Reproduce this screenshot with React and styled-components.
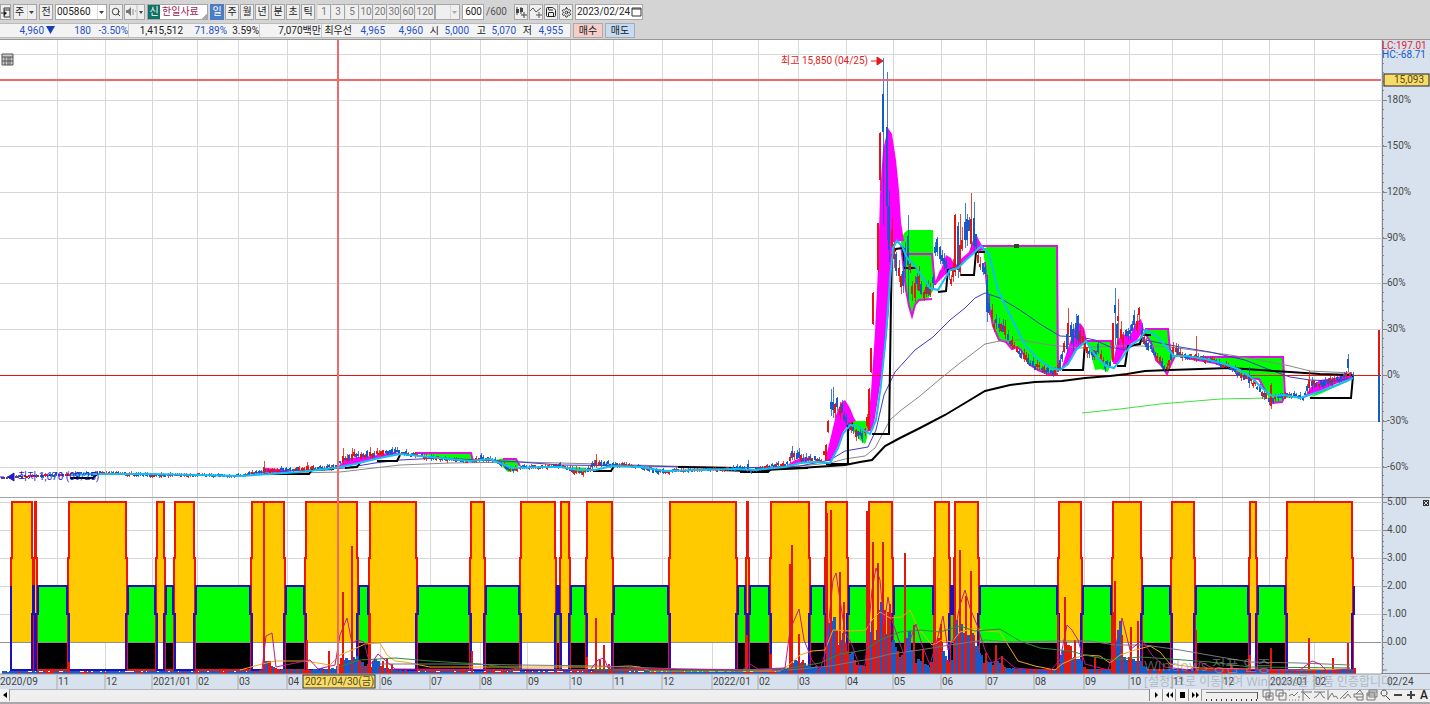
import React from 'react';
import styled, { createGlobalStyle, css } from 'styled-components';
import { LuSearch, LuSettings, LuSave } from 'react-icons/lu';

const GlobalStyle = createGlobalStyle`
  * {
    box-sizing: border-box;
  }
  body {
    margin: 0;
    background: #d4d4d4;
    color: #222;
    font-family: Roboto, 'Noto Sans CJK KR', sans-serif;
    font-size: 10px;
    line-height: 14px;
  }
  button, input, select {
    font: inherit;
    color: inherit;
    margin: 0;
    padding: 0;
    border-radius: 0;
  }
`;

const Page = styled.div`
  display: flex;
  flex-direction: column;
  height: 100vh;
  min-height: 400px;
  overflow: hidden;
`;

const Toolbar = styled.div`
  display: flex;
  align-items: center;
  gap: 2px;
  height: 22px;
  padding-top: 2px;
  white-space: nowrap;
`;

const Group = styled.div`
  display: flex;
  gap: ${(p) => (p.$tight ? 0 : 1)}px;
`;

const ToolButton = styled.button`
  display: flex;
  align-items: center;
  justify-content: center;
  width: ${(p) => p.$width || 14}px;
  height: 16px;
  border: 1px solid #a6a6a6;
  background: #efefef;
  line-height: 14px;
  ${(p) =>
    p.$muted &&
    css`
      color: #777;
      border-left-color: #e4e4e4;
    `}
  ${(p) =>
    p.$active &&
    css`
      background: #4b7cc4;
      border-color: #4b7cc4;
      color: #fff;
    `}
  svg {
    flex: none;
  }
`;

const Field = styled.div`
  display: flex;
  align-items: center;
  width: ${(p) => p.$width}px;
  height: 16px;
  border: 1px solid #a6a6a6;
  background: ${(p) => (p.$plain ? '#efefef' : '#fff')};
  input,
  select {
    flex: 1;
    min-width: 0;
    height: 14px;
    padding: 0 1px;
    border: 0;
    outline: 0;
    background: transparent;
    appearance: none;
    text-align: ${(p) => p.$align || 'left'};
  }
  svg {
    flex: none;
  }
`;

const Total = styled.span`
  width: 26px;
  color: #555;
`;

const Stock = styled.div`
  display: flex;
  width: 61px;
  height: 16px;
  border: 1px solid #a6a6a6;
  background: linear-gradient(135deg, #fff 93%, #aaa 93%);
  color: #a01850;
  b {
    width: 12px;
    margin-right: 2px;
    background: #0f7267;
    color: #fff;
    font-weight: 400;
    text-align: center;
  }
`;

const QuoteBar = styled.div`
  display: flex;
  gap: 2px;
  height: 17px;
  padding: 1px 0;
  white-space: nowrap;
`;

const Quotes = styled.div`
  display: flex;
  width: 571px;
  border: 1px solid #bbb;
  border-left: 0;
  background: #f3f3f3;
`;

const Quote = styled.span`
  width: ${(p) => p.$width}px;
  height: 13px;
  line-height: 13px;
  text-align: right;
  color: ${(p) => (p.$blue ? '#1f52c8' : '#222')};
  border-right: ${(p) => (p.$line ? '1px solid #ccc' : '0')};
`;

const OrderButton = styled.button`
  width: 30px;
  height: 15px;
  border: 1px solid #aaa;
  background: ${(p) => (p.$sell ? '#c3dbf3' : '#f5cdc9')};
  line-height: 12px;
`;

const ChartGrid = styled.main`
  position: relative;
  flex: 1;
  min-height: 0;
  display: grid;
  grid-template-columns: minmax(0, 1fr) 49px;
  grid-template-rows: 458fr 176fr 15px;
  border-top: 1px solid #989898;
`;

const Panel = styled.svg`
  display: block;
  width: 100%;
  height: 100%;
  min-height: 0;
  overflow: ${(p) => (p.$axis ? 'visible' : 'hidden')};
  background: ${(p) => (p.$axis ? '#d7e2ee' : '#fff')};
  font-size: 10px;
`;

const Watermark = styled.div`
  position: absolute;
  right: 0;
  bottom: 0;
  width: 286px;
  color: rgba(150, 154, 160, 0.6);
  font-family: 'Open Sans', 'Noto Sans CJK KR', sans-serif;
  font-size: 12px;
  line-height: 14px;
  white-space: nowrap;
  pointer-events: none;
  p {
    margin: 0;
  }
  p:first-child {
    font-size: 15px;
    line-height: 20px;
  }
`;

const BottomBar = styled.footer`
  display: flex;
  align-items: center;
  height: 15px;
  padding-bottom: 2px;
  border-top: 1px solid #b4b4b4;
  background: #efefef;
  border-bottom: 2px solid #a8a8a8;
`;

const Track = styled.div`
  display: flex;
  flex: 1;
  height: 12px;
  border-right: 1px solid #888;
`;

const PlayButton = styled.button`
  display: flex;
  align-items: center;
  justify-content: center;
  width: ${(p) => p.$width || 13}px;
  height: 12px;
  border: 0;
  border-right: 1px solid #999;
  background: #f4f4f4;
`;

const Speed = styled.input`
  width: 52px;
  height: 12px;
  margin: 0 4px;
  appearance: none;
  background: linear-gradient(#777, #777) 0 3px / 100% 1px no-repeat,
    repeating-linear-gradient(90deg, #333 0 1px, transparent 1px 5px) 0 10px / 100% 2px no-repeat;
  &::-webkit-slider-thumb {
    appearance: none;
    width: 1px;
    height: 7px;
    background: #555;
  }
`;

const BottomTools = styled.div`
  display: flex;
  width: 168px;
  justify-content: space-between;
`;

const IconButton = styled.button`
  display: flex;
  align-items: center;
  justify-content: center;
  width: 12px;
  height: 12px;
  border: 0;
  background: transparent;
  font-size: 12px;
  font-weight: 500;
`;

const BLUE = '#1659c8';
const RED = '#e3170d';
const MAGENTA = '#ff00ff';
const GREEN = '#00ff00';
const CYAN = '#12c0f0';
const CROSSHAIR = '#f06a6a';

const months = [
  [57, '11'], [105, '12'], [152, '2021/01'], [197, '02'], [238, '03'], [287, '04'],
  [380, '06'], [430, '07'], [480, '08'], [527, '09'], [570, '10'], [613, '11'],
  [662, '12'], [712, '2022/01'], [758, '02'], [798, '03'], [846, '04'], [893, '05'],
  [941, '06'], [986, '07'], [1034, '08'], [1084, '09'], [1129, '10'], [1172, '11'],
  [1222, '12'], [1269, '2023/01'], [1314, '02'],
];

const priceTicks = [
  [100, '180%'], [146, '150%'], [192, '120%'], [238, '90%'], [283, '60%'],
  [329, '30%'], [375, '0%'], [421, '-30%'], [467, '-60%'],
];

const signalTicks = [
  [502, '5.00'], [530, '4.00'], [558, '3.00'], [586, '2.00'], [614, '1.00'], [642, '0.00'],
];

// spans where the buy signal is on
const signals = [
  [12, 32], [35, 36], [69, 126], [157, 164], [175, 194], [252, 284], [306, 357],
  [370, 416], [471, 484], [521, 555], [561, 569], [587, 612], [670, 736], [747, 748],
  [771, 809], [826, 847], [869, 892], [935, 949], [955, 978], [1059, 1081],
  [1113, 1141], [1172, 1194], [1250, 1256], [1287, 1352],
];

// x, middle, spread
const pricePath = [
  [2, 478, 1], [12, 477, 1], [60, 475, 3], [100, 473, 3], [150, 475, 4], [200, 475, 3],
  [240, 476, 3], [262, 471, 4], [300, 469, 4], [334, 467, 5], [341, 461, 7], [354, 456, 8],
  [372, 455, 7], [392, 451, 6], [402, 453, 5], [430, 457, 5], [450, 460, 4], [470, 461, 4],
  [480, 458, 6], [495, 460, 5], [511, 471, 6], [521, 467, 4], [545, 467, 4], [560, 465, 4],
  [575, 472, 6], [585, 472, 6], [596, 464, 7], [612, 464, 5], [640, 467, 3], [662, 472, 6],
  [690, 470, 3], [720, 470, 3], [740, 468, 5], [752, 471, 4], [770, 466, 4], [786, 464, 5],
  [791, 455, 10], [800, 457, 9], [810, 459, 7], [822, 461, 5], [827, 435, 12], [830, 406, 14],
  [837, 405, 13], [842, 411, 14], [848, 424, 10], [856, 432, 10], [863, 438, 10],
  [866, 428, 14], [889, 225, 25], [892, 245, 25], [899, 275, 22], [902, 290, 20],
  [905, 260, 30], [909, 258, 26], [912, 292, 20], [918, 284, 22], [924, 295, 14],
  [932, 290, 14], [936, 240, 18], [941, 257, 16], [946, 262, 16], [951, 282, 14],
  [955, 255, 28], [959, 250, 28], [965, 235, 28], [970, 230, 28], [974, 235, 24],
  [978, 258, 14], [985, 272, 16], [988, 305, 22], [993, 322, 14], [1003, 325, 14],
  [1008, 340, 10], [1018, 350, 10], [1030, 364, 9], [1042, 369, 8], [1056, 373, 6],
  [1062, 355, 16], [1068, 335, 22], [1078, 330, 20], [1084, 345, 12], [1090, 356, 12],
  [1098, 350, 12], [1105, 367, 9], [1111, 362, 12], [1114, 345, 18], [1118, 328, 20],
  [1124, 338, 16], [1132, 330, 14], [1139, 320, 14], [1144, 343, 9], [1151, 346, 9],
  [1158, 358, 9], [1167, 370, 8], [1173, 348, 12], [1182, 356, 7], [1200, 357, 7],
  [1216, 362, 6], [1230, 368, 6], [1240, 375, 7], [1250, 379, 8], [1262, 393, 8],
  [1270, 402, 9], [1280, 397, 6], [1292, 395, 5], [1303, 398, 5], [1309, 385, 10],
  [1320, 384, 8], [1335, 380, 8], [1346, 376, 6], [1353, 375, 5],
];

// x, high, body top, body bottom, low, colour
const keyCandles = [
  [264, 461, 467, 473, 474, RED], [307, 462, 466, 470, 471, RED], [343, 448, 456, 462, 464, RED],
  [352, 448, 454, 460, 461, RED], [370, 447, 452, 456, 458, RED], [392, 447, 449, 455, 456, BLUE],
  [596, 454, 460, 466, 468, RED], [748, 460, 464, 470, 471, BLUE], [826, 444, 445, 460, 461, RED],
  [828, 420, 421, 432, 433, RED], [831, 389, 402, 409, 416, BLUE], [833, 387, 402, 410, 418, BLUE],
  [869, 388, 389, 430, 431, RED], [871, 348, 348, 372, 373, RED], [873, 292, 293, 324, 325, RED],
  [878, 223, 223, 270, 272, RED], [880, 132, 133, 180, 191, RED], [883, 58, 94, 132, 225, BLUE],
  [887, 72, 127, 206, 240, BLUE], [889, 190, 206, 250, 262, BLUE], [908, 215, 236, 265, 300, BLUE],
  [955, 214, 215, 272, 276, RED], [958, 222, 226, 270, 278, BLUE], [960, 214, 245, 272, 276, RED],
  [965, 203, 222, 240, 248, BLUE], [971, 193, 219, 244, 250, RED], [974, 202, 218, 246, 252, BLUE],
  [987, 275, 280, 312, 322, BLUE], [1068, 308, 323, 334, 345, RED], [1078, 315, 316, 340, 345, BLUE],
  [1113, 323, 323, 360, 362, RED], [1115, 288, 305, 313, 345, BLUE], [1118, 299, 316, 321, 345, RED],
  [1134, 310, 315, 325, 330, BLUE], [1139, 307, 308, 315, 325, RED], [1196, 336, 354, 359, 362, RED],
  [1249, 367, 376, 383, 388, BLUE], [1271, 383, 385, 406, 409, RED], [1309, 371, 380, 388, 396, RED],
  [1348, 354, 359, 368, 372, BLUE],
];

// x, height of the ordinary bars
const volumePath = [
  [2, 3], [250, 3], [262, 5], [266, 15], [275, 6], [300, 5], [334, 6], [340, 18], [351, 16],
  [356, 20], [363, 10], [370, 10], [374, 16], [382, 7], [396, 5], [420, 3], [590, 3],
  [600, 6], [620, 3], [740, 3], [786, 4], [794, 18], [805, 10], [820, 6], [825, 12],
  [829, 62], [834, 60], [837, 36], [843, 46], [849, 26], [855, 10], [865, 8], [868, 52],
  [876, 52], [881, 88], [884, 50], [893, 34], [899, 20], [904, 24], [907, 50], [911, 20],
  [920, 12], [928, 8], [934, 20], [937, 50], [943, 22], [951, 14], [955, 55], [963, 50],
  [970, 46], [976, 30], [985, 13], [997, 14], [1006, 6], [1055, 4], [1060, 22],
  [1067, 45], [1071, 18], [1079, 18], [1083, 7], [1110, 4], [1114, 40], [1118, 66],
  [1121, 18], [1130, 18], [1139, 14], [1146, 5], [1200, 4], [1300, 4], [1353, 6],
];

const volumeSpikes = [
  [69, 662], [264, 503], [307, 640], [329, 651], [338, 513], [343, 592], [352, 546], [370, 613],
  [383, 661], [387, 658], [392, 664], [472, 651], [587, 657], [596, 618], [600, 660], [604, 645],
  [609, 664], [747, 635], [771, 654], [790, 564], [792, 545], [799, 634], [803, 660],
  [827, 513], [831, 510], [840, 572], [844, 602], [867, 511], [869, 503], [873, 542],
  [878, 563], [883, 542], [888, 612], [890, 604], [905, 553], [914, 625], [923, 649],
  [935, 518], [941, 624], [955, 521], [960, 550], [966, 596], [971, 571], [974, 635],
  [986, 653], [996, 645], [1002, 656], [1058, 614], [1065, 597], [1075, 640], [1095, 657],
  [1113, 612], [1115, 581], [1122, 635], [1131, 627], [1138, 621], [1196, 630], [1271, 648],
  [1309, 638], [1333, 658], [1348, 643], [1250, 655], [1231, 664],
];

const random = (seed) => {
  let s = seed;
  return () => {
    s = (s * 16807) % 2147483647;
    return s / 2147483647;
  };
};

const at = (path, x, k) => {
  const i = path.findIndex((p) => p[0] >= x);
  if (i < 0) return path[path.length - 1][k];
  if (i === 0) return path[0][k];
  const a = path[i - 1];
  const b = path[i];
  return a[k] + ((b[k] - a[k]) * (x - a[0])) / (b[0] - a[0]);
};

const STEP = 2.27;

const makeCandles = () => {
  const rnd = random(77);
  const list = [];
  for (let x = 2; x < 1354; x += STEP) {
    const spread = at(pricePath, x, 2);
    const mid = at(pricePath, x, 1) + (rnd() - 0.5) * spread * 0.5;
    const body = Math.max(2, spread * (0.25 + rnd() * 0.5));
    const up = rnd() * spread * 0.5;
    const down = rnd() * spread * 0.4;
    const color = rnd() > 0.52 ? RED : BLUE;
    const taken = (x > 867 && x < 888) || keyCandles.some((c) => Math.abs(c[0] - x) < 1.1);
    if (!taken) list.push([x, mid - body / 2 - up, mid - body / 2, mid + body / 2, mid + body / 2 + down, color]);
  }
  return list.concat(keyCandles);
};

const makeVolumes = () => {
  const rnd = random(1234);
  const list = [];
  for (let x = 2; x < 1354; x += STEP) {
    const red = rnd() > 0.7;
    const h = at(volumePath, x, 1) * (red ? 0.6 + rnd() * 0.4 : 0.75 + rnd() * 0.3);
    list.push([x, h, red ? RED : BLUE]);
  }
  return list;
};

const candles = makeCandles();
const volumes = makeVolumes();

const signalLine = signals
  .map(([a, b]) => `${a - 1},670 ${a - 1},558 ${a},558 ${a},502 ${b},502 ${b},558 ${b + 1},558 ${b + 1},670`)
  .join(' ');
const idleLine = `11,586 11,670 ${signals
  .map(([a, b], i) => {
    const next = signals[i + 1];
    const up = `${b},670 ${b},614 ${b + 2},614 ${b + 2},586`;
    return next ? `${up} ${next[0] - 2},586 ${next[0] - 2},614 ${next[0]},614 ${next[0]},670` : up;
  })
  .join(' ')}`;

const magentaAreas = [
  '262,472 266,468 280,469 292,471 280,473',
  '338,467 345,459 358,457 372,456 392,452 400,453 385,457 365,461 350,465',
  '786,466 795,460 806,457 812,460 800,463',
  '825,461 831,436 836,415 841,403 845,400 850,408 854,418 856,421 849,424 843,432 838,447 832,461',
  '867,432 871,392 875,332 878,268 880,195 883,150 888,128 892,134 896,160 899,190 901,222 904,241 893,242 891,262 889,310 885,352 879,392 873,430',
  '936,284 941,270 946,255 951,258 955,266 962,258 969,252 973,240 976,234 980,242 985,250 976,252 968,258 958,268 948,272 941,279',
  '1061,370 1069,345 1075,327 1080,323 1084,328 1087,341 1080,345 1074,355 1068,365',
  '1113,364 1117,342 1122,334 1130,336 1136,322 1141,319 1144,330 1137,340 1129,345 1123,354 1118,364',
  '1304,398 1311,387 1320,380 1335,378 1352,372 1352,379 1338,383 1322,390',
];

const greenAreas = [
  '415,453 471,453 473,461 458,460 435,457',
  '495,460 505,458 515,459 520,464 515,471 508,472 502,466',
  '572,467 585,468 588,471 583,473 577,472',
  '848,424 853,421 867,421 867,438 865,444 860,440 855,433',
  '901,242 904,233 908,230 933,230 934,289 928,299 919,300 915,305 912,316 909,306 906,290 903,262',
  '983,249 987,247 1057,247 1057,374 1048,374 1038,370 1029,364 1021,350 1017,347 1012,349 1006,342 999,340 993,326 988,300 985,265',
  '1087,341 1111,342 1112,358 1108,372 1101,369 1095,370 1092,358 1088,346',
  '1143,329 1168,329 1170,345 1174,360 1170,366 1167,374 1161,365 1156,360 1152,345',
  '1180,357 1283,358 1284,395 1281,402 1271,403 1266,392 1259,379 1245,378 1234,370 1215,363 1195,360',
  '1308,398 1322,390 1338,384 1352,380 1335,387 1320,394',
];

const magentaLines = [
  '415,453 471,453 473,461',
  '503,459 516,459 520,466',
  '905,254 932,254 935,285 941,270',
  '901,245 906,290 909,306 912,316 915,305 919,300 932,299',
  '981,246 1057,246 1058,372',
  '985,262 988,300 993,326 999,340 1006,342 1012,349 1017,347 1021,350 1029,364 1038,370 1048,374 1058,374',
  '1087,341 1111,341 1113,362',
  '1145,329 1168,329 1170,350 1172,355',
  '1145,333 1152,345 1156,360 1161,365 1167,374 1171,364 1175,356',
  '1202,357 1283,357 1285,395 1282,402 1271,403',
  '1186,358 1215,363 1234,370 1245,378 1259,379 1266,392',
];

const blackSteps = [
  '70,478 93,478 97,474',
  '264,474 309,474 312,470 334,469',
  '345,468 357,467 360,463',
  '377,461 397,461 400,455',
  '593,471 611,471 614,466',
  '678,467 735,468 742,471',
  '740,472 768,472 771,469 808,468',
  '826,464 848,464 848,426 853,423',
  '872,434 889,434 891,300 892,255 896,249 903,248 905,268 917,268',
  '938,292 946,291 948,270 956,269',
  '960,275 974,275 976,252 985,252',
  '1062,370 1083,370 1085,342',
  '1117,366 1125,366 1128,346 1140,344 1142,335 1151,335',
  '1310,398 1351,398 1353,376',
];

const cyanLine =
  '70,475 95,474 150,474 200,475 240,476 270,474 300,472 335,468 355,464 375,459 400,454 430,457 470,461 490,459 512,468 545,467 560,467 578,470 595,470 612,466 640,467 665,471 700,470 735,469 755,470 785,467 800,463 815,462 830,463 838,448 843,434 850,425 857,426 863,430 870,434 876,420 881,385 886,335 890,280 893,248 897,241 902,246 907,258 915,266 921,275 930,288 938,290 944,280 950,270 958,268 966,260 975,252 981,246 989,254 993,270 998,290 1005,305 1015,325 1025,345 1037,358 1049,367 1060,370 1068,364 1076,350 1086,341 1095,355 1106,366 1114,368 1122,358 1130,346 1140,339 1146,330 1158,337 1167,348 1174,356 1187,356 1205,359 1225,364 1240,370 1252,378 1262,388 1272,396 1284,395 1300,398 1318,392 1335,386 1353,378';

const volumeAverages = [
  ['#f0a818', '240,670 262,664 275,661 305,661 330,665 340,655 352,650 365,644 380,643 387,655 395,661 405,662 430,667 600,667 630,666 640,667 650,671 780,671 790,664 800,655 812,651 825,650 833,630 850,631 866,630 872,620 880,612 890,618 902,617 910,610 918,628 925,636 932,645 942,640 952,642 960,632 975,628 985,631 1000,632 1008,645 1018,661 1035,666 1055,670 1062,664 1075,658 1085,655 1100,656 1110,663 1120,655 1135,650 1150,646 1160,652 1170,664 1200,668 1300,670 1350,669'],
  ['#2e8a3a', '336,668 360,660 395,658 430,661 480,664 520,669 740,671 790,668 820,663 840,654 865,650 880,640 900,632 920,630 940,632 960,626 975,631 1000,629 1020,641 1040,648 1070,651 1085,655 1110,660 1140,657 1170,659 1210,662 1250,667 1350,668'],
  ['#777', '380,664 450,664 520,665 600,666 680,669 790,670 830,666 870,659 890,654 920,650 950,645 985,640 1010,642 1060,641 1090,641 1115,645 1145,645 1180,650 1220,657 1250,662 1300,663 1350,665'],
  ['#c01890', '262,670 266,636 272,633 276,667 310,660 318,669 335,665 340,635 347,618 352,643 358,640 364,642 370,665 378,654 385,660 395,669 590,670 598,660 604,658 608,668 742,670 750,664 758,669 785,668 790,630 799,609 804,640 812,660 820,670 826,650 833,580 836,573 840,600 845,632 852,645 860,668 865,665 872,590 876,568 880,580 884,625 888,597 892,620 898,638 904,655 910,640 916,624 922,645 930,665 937,640 943,616 948,650 953,640 960,605 965,590 970,608 977,625 985,650 992,663 1002,657 1015,668 1050,671 1060,660 1067,625 1072,630 1078,640 1085,664 1108,670 1117,640 1122,618 1130,650 1142,640 1152,655 1165,667 1190,670 1200,662 1215,669 1300,670 1312,661 1320,664 1327,671 1350,669'],
];

function Grid({ top, bottom, lines }) {
  return (
    <g stroke="#d8d8d8" shapeRendering="crispEdges">
      {months.map(([x]) => (
        <line key={x} x1={x} x2={x} y1={top} y2={bottom} />
      ))}
      {lines.map((y) => (
        <line key={y} x1="0" x2="1381" y1={y} y2={y} />
      ))}
    </g>
  );
}

function PriceChart() {
  return (
    <Panel viewBox="0 40 1381 458" preserveAspectRatio="none" role="img" aria-label="한일사료 일봉">
      <Grid top={40} bottom={498} lines={[54, ...priceTicks.map((t) => t[0])]} />
      <g fill={GREEN}>
        {greenAreas.map((p) => (
          <polygon key={p} points={p} />
        ))}
      </g>
      <g fill={MAGENTA}>
        {magentaAreas.map((p) => (
          <polygon key={p} points={p} />
        ))}
      </g>
      <g fill="none" stroke="#e010e0" strokeWidth="2">
        {magentaLines.map((p) => (
          <polyline key={p} points={p} />
        ))}
      </g>
      <rect x="0" y="375" width="1381" height="1" fill={RED} />
      <g fill="none">
        <polyline stroke="#888" points="250,474 340,472 400,465 450,463 520,462 600,464 700,467 780,468 830,463 845,459 865,456 875,448 890,420 900,411 920,396 940,379 960,363 985,344 1000,341 1020,340 1050,345 1080,348 1110,346 1140,346 1170,347 1200,351 1230,355 1260,360 1290,366 1310,371 1352,373" />
        <polyline stroke="#4038c8" points="250,473 345,468 375,463 400,460 440,458 480,460 520,462 560,465 640,466 740,468 800,466 830,460 845,451 868,447 876,430 884,395 895,372 915,350 933,337 950,320 965,308 975,298 985,293 1000,298 1020,310 1040,324 1060,336 1080,337 1095,340 1110,347 1125,350 1145,340 1160,343 1180,347 1210,352 1245,360 1270,370 1290,377 1310,380 1335,381 1352,378" />
        <polyline stroke="#40e040" points="1082,413 1120,409 1160,404 1220,399 1270,398 1300,397" />
        <polyline stroke="#000" strokeWidth="2" points="720,470 750,471 800,468 845,465 860,462 872,460 885,446 900,438 920,428 945,415 965,403 985,391 1010,385 1035,382 1062,381 1085,378 1110,376 1127,374 1145,371 1170,370 1200,369 1230,368 1260,370 1290,372 1320,374 1352,375" />
        {blackSteps.map((p) => (
          <polyline key={p} points={p} stroke="#000" strokeWidth="2" />
        ))}
      </g>
      <g shapeRendering="crispEdges">
        {candles.map(([x, high, top, bottom, low, color]) => (
          <g key={x} fill={color}>
            <rect x={x} y={high} width="1" height={low - high} opacity="0.8" />
            <rect x={x - 1} y={top} width="2" height={bottom - top} />
          </g>
        ))}
      </g>
      <polyline fill="none" stroke={CYAN} strokeWidth="2" points={cyanLine} />
      <rect x="1014" y="244" width="5" height="4" fill="#274b20" />
      <rect x="0" y="79" width="1381" height="2" fill={CROSSHAIR} />
      <rect x="337" y="40" width="2" height="458" fill={CROSSHAIR} />
      <text x="868" y="64" textAnchor="end" fill="#e01c1c">최고 15,850 (04/25)</text>
      <path d="M871 61h7M877 57l6 4-6 4z" stroke="#e01c1c" fill="#e01c1c" />
      <text x="18" y="480" fill="#1c1ccc">최저 1,670 (09/25)</text>
      <path d="M14 473v8l-6-4zM0 477h4" fill="#1c1ccc" stroke="#1c1ccc" />
      <path d="M2 54h11v11H2zM2 57h11M5 57v8M8 57v8M10 57v8M2 61h11" fill="#ccc" stroke="#555" strokeWidth="1" />
      <path d="M1379 330v45" stroke={RED} strokeWidth="2" />
      <path d="M1379 375v47" stroke={BLUE} strokeWidth="2" />
      <line x1="0" x2="1381" y1="497" y2="497" stroke="#a4a4a4" shapeRendering="crispEdges" />
    </Panel>
  );
}

function SignalChart() {
  return (
    <Panel viewBox="0 498 1381 176" preserveAspectRatio="none" role="img" aria-label="신호">
      <Grid top={498} bottom={674} lines={signalTicks.map((t) => t[0])} />
      <g shapeRendering="crispEdges">
        {signals.map(([a, b], i) => {
          const next = signals[i + 1];
          return (
            <g key={a}>
              <rect x={a} y="502" width={b - a} height="140" fill="#ffca00" />
              {next && <rect x={b + 1} y="586" width={next[0] - b - 2} height="56" fill={GREEN} />}
              {next && <rect x={b + 1} y="642" width={next[0] - b - 2} height="28" fill="#000" />}
            </g>
          );
        })}
        <line x1="0" x2="1381" y1="642" y2="642" stroke="#909090" />
      </g>
      <polyline points={signalLine} fill="none" stroke="#f01408" strokeWidth="2" />
      <polyline points={idleLine} fill="none" stroke="#1a10c0" strokeWidth="2" />
      <g shapeRendering="crispEdges">
        {volumes.map(([x, h, color]) => (
          <rect key={x} x={x} y={674 - h} width="3" height={h} fill={color} />
        ))}
        {volumeSpikes.map(([x, y]) => (
          <rect key={x} x={x - 1} y={y} width="2" height={674 - y} fill={RED} />
        ))}
      </g>
      <g fill="none">
        {volumeAverages.map(([color, points]) => (
          <polyline key={color} points={points} stroke={color} />
        ))}
      </g>
      <rect x="337" y="498" width="2" height="176" fill={CROSSHAIR} />
    </Panel>
  );
}

function Axis({ top, height, ticks, minor, children }) {
  const small = [];
  for (let y = ticks[0][0] % minor; y < top + height; y += minor) {
    if (y > top + 15) small.push(y);
  }
  return (
    <Panel $axis viewBox={`1381 ${top} 49 ${height}`} preserveAspectRatio="none">
      <g stroke="#888" shapeRendering="crispEdges">
        <line x1="1382" x2="1382" y1={top} y2={top + height} />
        <line x1="1381" x2="1430" y1={top + height - 1} y2={top + height - 1} />
        {small.map((y) => (
          <line key={y} x1="1382" x2="1384" y1={y} y2={y} />
        ))}
        {ticks.map(([y]) => (
          <line key={y} x1="1382" x2="1387" y1={y} y2={y} />
        ))}
      </g>
      {ticks.map(([y, label]) => (
        <text key={y} x="1387" y={y + 3} fill="#4a4a4a">
          {label}
        </text>
      ))}
      {children}
    </Panel>
  );
}

function DateAxis() {
  return (
    <Panel $axis viewBox="0 674 1381 15" preserveAspectRatio="none">
      <path d="M0 674h1381" stroke="#999" />
      <text x="0" y="685" fill="#444">2020/09</text>
      {months.map(([x, label]) => (
        <g key={x}>
          <path d={`M${x} 675v14`} stroke="#aaa" />
          <text x={x + 1} y="685" fill="#444">
            {label}
          </text>
        </g>
      ))}
      <rect x="303" y="675" width="72" height="13" fill="#f8dc68" stroke="#333" />
      <text x="305" y="685" fill="#554a20">2021/04/30(금)</text>
    </Panel>
  );
}

function Arrow({ color = '#444' }) {
  return (
    <svg width="9" height="14">
      <path d="M0 0v14" stroke="#bbb" />
      <path d="M2 6h5l-2.500 3z" fill={color} />
    </svg>
  );
}

const playIcons = [
  ['재생', 'M4 3l3 3-3 3z'],
  ['되감기', 'M5 3v6L2 6zM9 3v6L6 6z'],
  ['정지', 'M3 3h5v6H3z'],
  ['빨리 감기', 'M2 3v6l3-3zM6 3v6l3-3z'],
];

const bottomIcons = [
  ['분할', 'M1 1h7v7H1zM4 4h7v7H4zM7 5v5M5 7h5'],
  ['겹치기', 'M1 1h7v6H1zM4 4h7v7H4z'],
  ['지표', 'M1 7l3-2 2 2 4-4M1 11h1M4 11h1M7 11h1M10 11h1M1 1h1M11 7v2'],
  ['추세선', 'M2 0v12M0 3h11M2 3l7 7'],
  ['수평선', 'M0 3h11M0 9l3-2 3-4 3 5 2 1'],
  ['파동', 'M1 1v10M1 10l4-6 2 4 2-1 2 3'],
  ['각도', 'M0 10l8-8M3 9h2l3-4 3 4'],
  ['도형', 'M1 5h9v3H1zM3 5l4-4 3 4M4 8v3h6V8'],
  ['창', 'M3 1h8v7H3zM1 4h8v7H1zM3 3h8M1 6h8'],
  ['돋보기', 'M5 1a3 3 0 1 0 .1 0M7 7l4 4'],
  ['축소', 'M2 6h8'],
  ['확대', 'M2 6h8M6 2v8'],
];

function TopToolbar() {
  return (
    <Toolbar>
      <ToolButton $width={11} aria-label="창 연결">
        <svg width="9" height="12">
          <path d="M3 2h6v9H3zM3 4h6M0 7h4" fill="none" stroke="#333" />
          <path d="M3 5l3 2-3 3z" fill="#222" />
        </svg>
      </ToolButton>
      <Field $width={24} $plain>
        <select aria-label="종목 구분">
          <option>주</option>
        </select>
        <Arrow />
      </Field>
      <ToolButton>전</ToolButton>
      <Field $width={52}>
        <input aria-label="종목 코드" defaultValue="005860" />
        <Arrow />
      </Field>
      <Group>
        <ToolButton aria-label="검색">
          <LuSearch size={10} />
        </ToolButton>
        <ToolButton $width={21} aria-label="소리">
          <svg width="19" height="14">
            <path d="M1 5h2l3-3v9L3 8H1z" fill="#777" />
            <path d="M8 4v6M10 6h1" stroke="#888" />
            <path d="M12 0v14" stroke="#bbb" />
            <path d="M14 6h4l-2 3z" fill="#444" />
          </svg>
        </ToolButton>
      </Group>
      <Stock>
        <b>신</b>한일사료
      </Stock>
      <Group>
        <ToolButton $active>일</ToolButton>
        <ToolButton>주</ToolButton>
        <ToolButton>월</ToolButton>
        <ToolButton>년</ToolButton>
      </Group>
      <Group>
        <ToolButton>분</ToolButton>
        <ToolButton>초</ToolButton>
        <ToolButton>틱</ToolButton>
      </Group>
      <Group $tight>
        {['1', '3', '5', '10', '20', '30', '60', '120'].map((n) => (
          <ToolButton key={n} $muted $width={n.length > 2 ? 20 : 14}>
            {n}
          </ToolButton>
        ))}
        <Field $width={25} $plain>
          <select aria-label="분 간격" />
          <Arrow color="#aaa" />
        </Field>
      </Group>
      <Field $width={22} $align="right">
        <input aria-label="봉 개수" defaultValue="600" />
      </Field>
      <Total>/600</Total>
      <Group>
        <ToolButton aria-label="봉 추가">
          <svg width="12" height="12">
            <path d="M2 1v8M6 1v7M9 6v6M6 9h6" stroke="#444" />
            <path d="M1 3h3v4H1zM5 2h3v4H5z" fill="#444" />
          </svg>
        </ToolButton>
        <ToolButton aria-label="지표 추가">
          <svg width="12" height="12">
            <path d="M0 5l3-3 3 4 5-4M9 6v6M6 9h6" fill="none" stroke="#555" />
          </svg>
        </ToolButton>
        <ToolButton aria-label="저장">
          <LuSave size={12} />
        </ToolButton>
        <ToolButton aria-label="설정">
          <LuSettings size={11} />
        </ToolButton>
      </Group>
      <Field $width={68}>
        <input aria-label="날짜" defaultValue="2023/02/24" />
        <svg width="11" height="14">
          <path d="M1 3h9v8H1zM1 4h9" fill="none" stroke="#333" />
        </svg>
      </Field>
    </Toolbar>
  );
}

function App() {
  return (
    <>
      <GlobalStyle />
      <Page>
        <TopToolbar />
        <QuoteBar>
          <Quotes>
            <Quote $width={44} $blue>4,960</Quote>
            <Quote $width={11} $blue>
              <svg width="9" height="9">
                <path d="M0 1h9L4.500 9z" fill="#1440c0" />
              </svg>
            </Quote>
            <Quote $width={36} $blue>180</Quote>
            <Quote $width={38} $blue $line>-3.50%</Quote>
            <Quote $width={54}>1,415,512</Quote>
            <Quote $width={44} $blue>71.89%</Quote>
            <Quote $width={33} $line>3.59%</Quote>
            <Quote $width={62} $line>7,070백만</Quote>
            <Quote $width={30}>최우선</Quote>
            <Quote $width={33} $blue>4,965</Quote>
            <Quote $width={38} $blue>4,960</Quote>
            <Quote $width={16}>시</Quote>
            <Quote $width={30} $blue>5,000</Quote>
            <Quote $width={17}>고</Quote>
            <Quote $width={30} $blue>5,070</Quote>
            <Quote $width={16}>저</Quote>
            <Quote $width={31} $blue>4,955</Quote>
          </Quotes>
          <OrderButton>매수</OrderButton>
          <OrderButton $sell>매도</OrderButton>
        </QuoteBar>
        <ChartGrid>
          <PriceChart />
          <Axis top={40} height={458} ticks={priceTicks} minor={9.17}>
            <text x="1382" y="49" fill="#e01c2c">LC:197.01</text>
            <text x="1382" y="58" fill="#1659c8">HC:-68.71</text>
            <rect x="1384" y="74" width="45" height="12" fill="#f8dc68" stroke="#222" />
            <text x="1394" y="83" fill="#554a20">15,093</text>
          </Axis>
          <SignalChart />
          <Axis top={498} height={176} ticks={signalTicks} minor={5.6}>
            <path d="M1382 670h5" stroke="#888" />
            <path d="M1423 500h6v6h-6z" fill="#333" />
            <path d="M1424 501l4 4M1428 501l-4 4" stroke="#ddd" />
          </Axis>
          <DateAxis />
          <Panel $axis viewBox="1381 674 49 15" preserveAspectRatio="none">
            <text x="1387" y="685" fill="#444">02/24</text>
          </Panel>
          <Watermark>
            <p>Windows 정품 인증</p>
            <p>[설정]으로 이동하여 Windows를 정품 인증합니다.</p>
          </Watermark>
        </ChartGrid>
        <BottomBar>
          <Track>
            <PlayButton $width={10} aria-label="왼쪽으로">
              <svg width="6" height="8">
                <path d="M5 1v6L1 4z" />
              </svg>
            </PlayButton>
          </Track>
          {playIcons.map(([name, d]) => (
            <PlayButton key={name} aria-label={name}>
              <svg width="11" height="12">
                <path d={d} />
              </svg>
            </PlayButton>
          ))}
          <Speed type="range" aria-label="속도" defaultValue="100" />
          <BottomTools>
            {bottomIcons.map(([name, d], i) => (
              <IconButton key={name} aria-label={name}>
                <svg width="12" height="12">
                  <path d={d} fill="none" stroke={i > 8 ? '#444' : '#777'} strokeWidth={i > 9 ? 2 : 1} />
                </svg>
              </IconButton>
            ))}
            <IconButton>A</IconButton>
          </BottomTools>
        </BottomBar>
      </Page>
    </>
  );
}

export default App;
